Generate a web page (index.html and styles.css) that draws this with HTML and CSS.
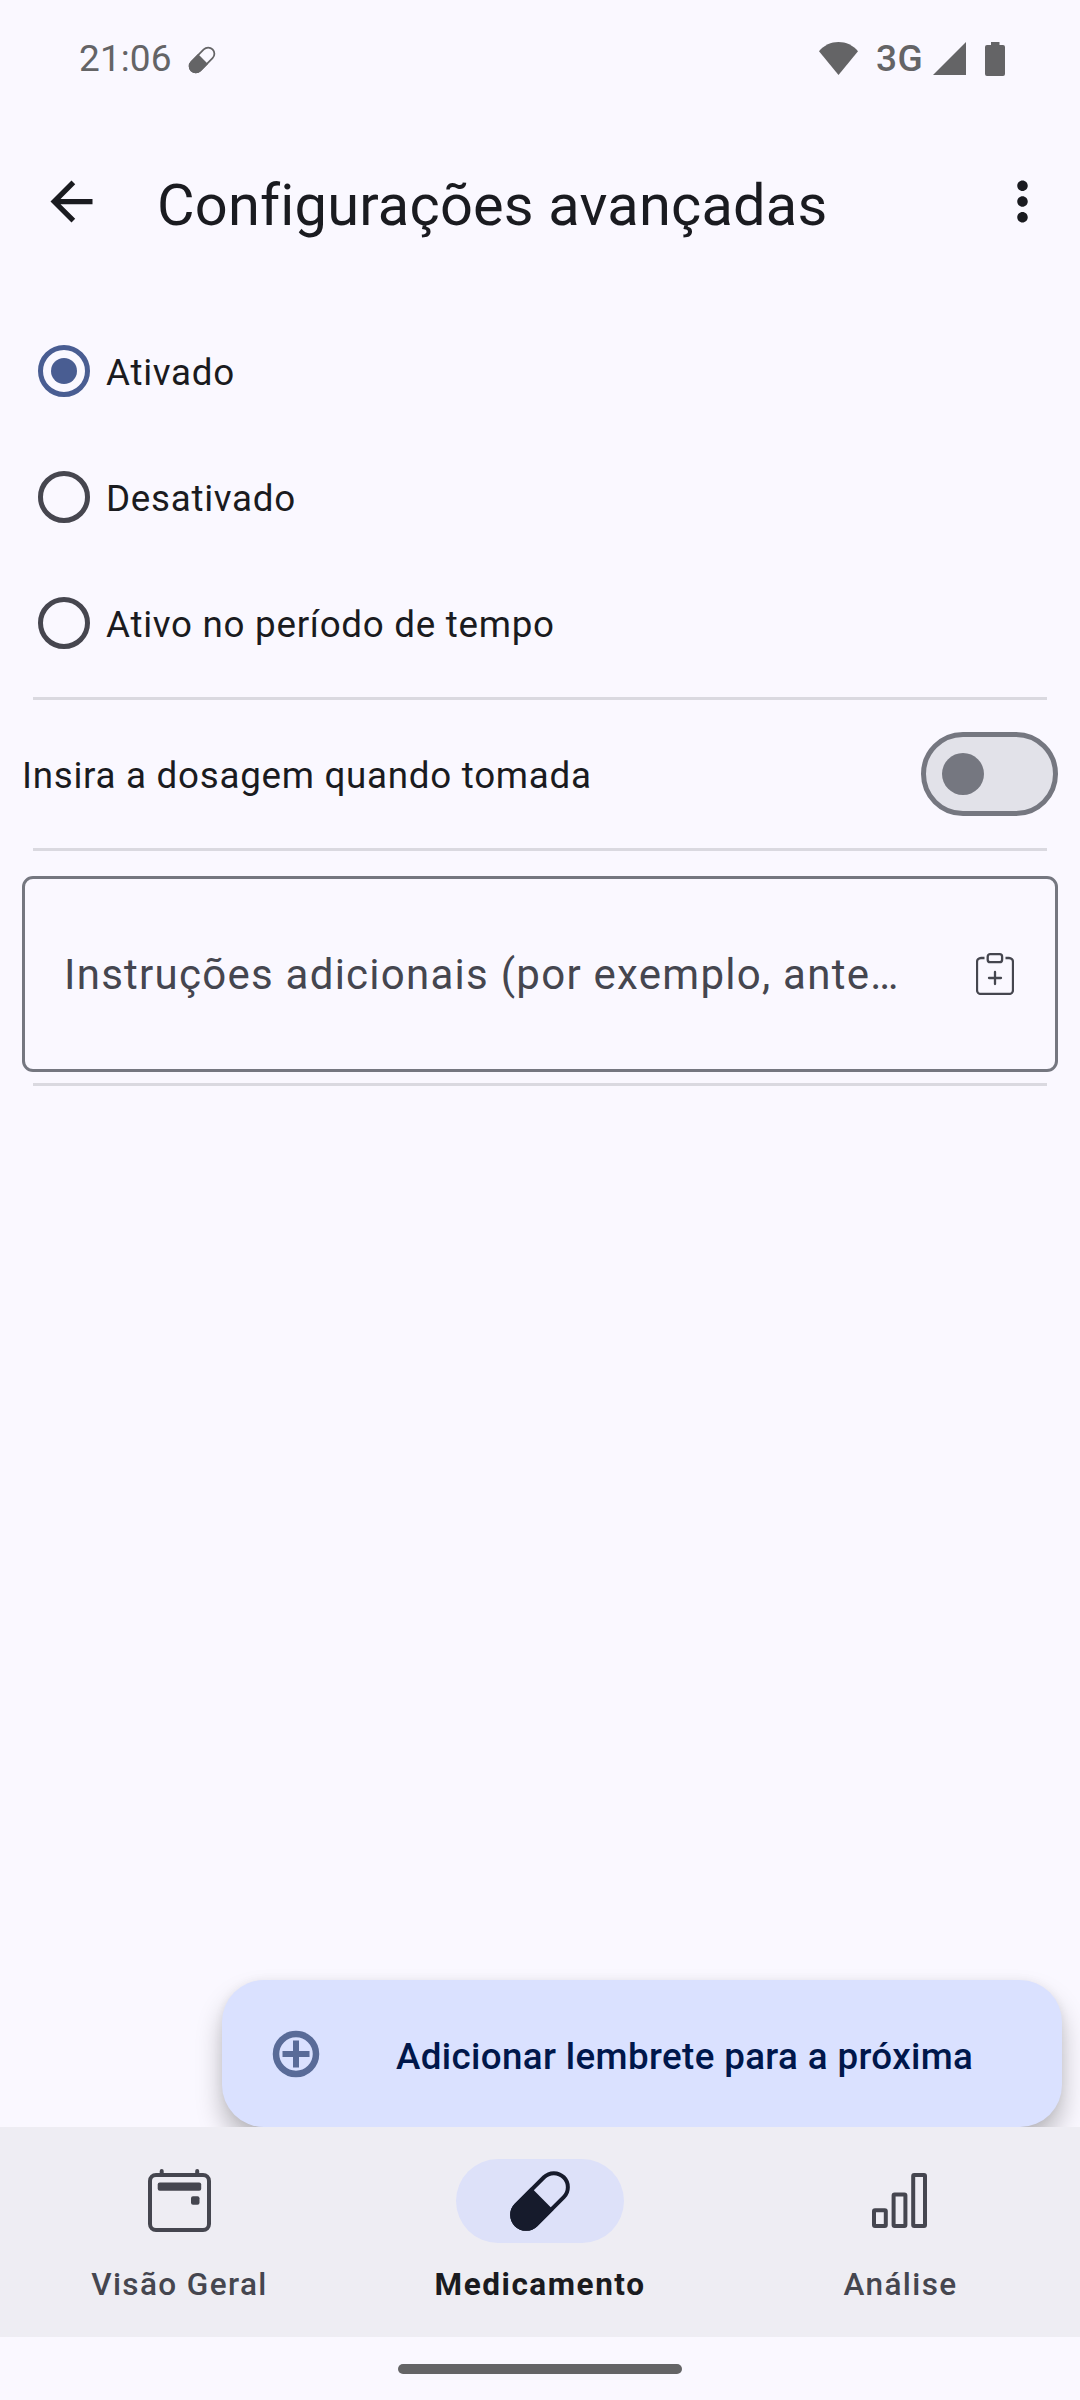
FILE: index.html
```html
<!DOCTYPE html>
<html lang="pt-BR">
<head>
  <meta charset="UTF-8">
  <title>Configurações avançadas</title>
  <link rel="stylesheet" href="styles.css">
</head>
<body>
  <div class="screen">
    <div class="status-bar">
      <span class="clock">21:06</span>
      <svg class="status-pill" viewBox="0 0 72 72">
        <g transform="translate(36 36) rotate(-45)">
          <rect x="-33.6" y="-14" width="67.2" height="28" rx="14" fill="none" stroke="currentColor" stroke-width="4"/>
          <path d="M3.2 -15.8H-19.8a15.8 15.8 0 0 0 0 31.6H3.2z" fill="currentColor"/>
        </g>
      </svg>
      <div class="status-right">
        <svg class="wifi" width="39" height="33" viewBox="0 0 39 33"><path d="M19.5 33L0 9.2C5 3.2 12 0 19.5 0S34 3.2 39 9.2z" fill="currentColor"/></svg>
        <span class="network">3G</span>
        <svg class="signal" width="33" height="33" viewBox="0 0 33 33"><path d="M33 0V33H0z" fill="currentColor"/></svg>
        <svg class="battery" width="20" height="34" viewBox="0 0 20 34"><path d="M6 0h8.500v3H18a2 2 0 0 1 2 2v27a2 2 0 0 1-2 2H2a2 2 0 0 1-2-2V5a2 2 0 0 1 2-2h4z" fill="currentColor"/></svg>
      </div>
    </div>

    <header class="app-bar">
      <svg class="back" viewBox="0 0 24 24"><path d="M20 11H7.830l5.590-5.590L12 4l-8 8 8 8 1.410-1.410L7.830 13H20v-2z" fill="currentColor"/></svg>
      <h1>Configurações avançadas</h1>
      <svg class="more" viewBox="0 0 24 24"><path d="M12 8c1.100 0 2-.9 2-2s-.9-2-2-2-2 .9-2 2 .9 2 2 2zm0 2c-1.100 0-2 .9-2 2s.9 2 2 2 2-.9 2-2-.9-2-2-2zm0 6c-1.100 0-2 .9-2 2s.9 2 2 2 2-.9 2-2-.9-2-2-2z" fill="currentColor"/></svg>
    </header>

    <main class="content">
      <div class="radio-row checked"><span class="radio"></span><span class="label">Ativado</span></div>
      <div class="radio-row"><span class="radio"></span><span class="label">Desativado</span></div>
      <div class="radio-row"><span class="radio"></span><span class="label">Ativo no período de tempo</span></div>

      <div class="divider divider-first"></div>

      <div class="switch-row">
        <span class="label">Insira a dosagem quando tomada</span>
        <span class="switch"><span class="thumb"></span></span>
      </div>

      <div class="divider"></div>

      <div class="text-field">
        <span class="hint">Instruções adicionais (por exemplo, ante…</span>
        <svg width="38" height="42" viewBox="0 0 38 42" fill="none" stroke="currentColor" stroke-width="2.300">
          <path d="M8.500 5H5a4 4 0 0 0-4 4v28a4 4 0 0 0 4 4h28a4 4 0 0 0 4-4V9a4 4 0 0 0-4-4h-3.500"/>
          <rect x="11.700" y="1.200" width="14.400" height="8" rx="2.500"/>
          <path d="M19 19v12M13 25h12" stroke-linecap="round"/>
        </svg>
      </div>

      <div class="divider divider-last"></div>

      <div class="fab">
        <svg width="48" height="48" viewBox="0 0 48 48" fill="none" stroke="currentColor">
          <circle cx="24" cy="24" r="20" stroke-width="6.500"/>
          <path d="M24 10.500v27M10.500 24h27" stroke-width="6"/>
        </svg>
        <span class="fab-text">Adicionar lembrete para a próxima</span>
      </div>
    </main>

    <nav class="bottom-nav">
      <div class="nav-item">
        <div class="indicator">
          <svg width="63" height="63" viewBox="0 0 63 63">
            <rect x="2" y="6" width="59" height="55" rx="6" fill="none" stroke="currentColor" stroke-width="4"/>
            <path d="M13.700 6V2M49.200 6V2" stroke="currentColor" stroke-width="4" stroke-linecap="round"/>
            <rect x="9.700" y="13.500" width="43.500" height="8.200" rx="2" fill="currentColor"/>
            <rect x="43" y="27.300" width="8.500" height="8.500" rx="2" fill="currentColor"/>
          </svg>
        </div>
        <span>Visão Geral</span>
      </div>
      <div class="nav-item active">
        <div class="indicator">
          <svg width="72" height="72" viewBox="0 0 72 72">
            <g transform="translate(36 36) rotate(-45)">
              <rect x="-33.6" y="-14" width="67.2" height="28" rx="14" fill="none" stroke="currentColor" stroke-width="4"/>
              <path d="M3.2 -15.8H-19.8a15.8 15.8 0 0 0 0 31.6H3.2z" fill="currentColor"/>
            </g>
          </svg>
        </div>
        <span>Medicamento</span>
      </div>
      <div class="nav-item">
        <div class="indicator">
          <svg width="55" height="55" viewBox="0 0 55 55" fill="none" stroke="currentColor" stroke-width="4">
            <rect x="2" y="37.300" width="11.800" height="15.700" rx="1"/>
            <rect x="21.600" y="21.600" width="11.800" height="31.400" rx="1"/>
            <rect x="41.200" y="2" width="11.800" height="51" rx="1"/>
          </svg>
        </div>
        <span>Análise</span>
      </div>
    </nav>

    <div class="gesture-area"><div class="gesture-bar"></div></div>
  </div>
</body>
</html>
```
FILE: styles.css
```css
* {
  box-sizing: border-box;
}

body {
  margin: 0;
  background: #faf8ff;
  color: #1a1b20;
  font-family: Roboto, "Liberation Sans", sans-serif;
}

svg {
  display: block;
  flex: none;
}

.screen {
  width: 1080px;
  height: 2400px;
  display: flex;
  flex-direction: column;
}

/* Status bar */
.status-bar {
  height: 128px;
  padding: 0 75px 11px 79px;
  display: flex;
  align-items: center;
  color: #646466;
}

.clock {
  font-size: 37px;
  line-height: 44px;
  letter-spacing: 0.1px;
  padding-top: 1px;
}

.status-pill {
  width: 32px;
  height: 32px;
  margin: 3px 0 0 14px;
}

.status-right {
  display: flex;
  align-items: center;
  margin-left: auto;
}

.network {
  font-size: 37px;
  font-weight: 500;
  line-height: 44px;
  margin: 0 10px 0 18px;
  letter-spacing: 0.4px;
}

.battery {
  margin: 1px 0 0 19px;
}

/* App bar */
.app-bar {
  height: 147px;
  padding: 0 26px 0 40px;
  display: flex;
  align-items: center;
}

.app-bar svg {
  width: 63px;
  height: 63px;
  margin-bottom: 1px;
}

.app-bar h1 {
  flex: 1;
  margin: 0;
  padding: 6px 0 0 54px;
  font-size: 57.75px;
  font-weight: 400;
  line-height: 68px;
  letter-spacing: 0.2px;
}

/* Content */
.content {
  flex: 1;
  padding-top: 33px;
  display: flex;
  flex-direction: column;
  overflow: hidden;
}

.label {
  font-size: 36.75px;
  line-height: 44px;
  letter-spacing: 0.72px;
  padding-top: 3px;
}

.radio-row {
  height: 126px;
  padding-left: 38px;
  display: flex;
  align-items: center;
  gap: 16px;
}

.radio {
  width: 52px;
  height: 52px;
  border: 5px solid #46464f;
  border-radius: 50%;
  display: flex;
  align-items: center;
  justify-content: center;
}

.checked .radio {
  border-color: #495d92;
}

.checked .radio::after {
  content: "";
  width: 26px;
  height: 26px;
  border-radius: 50%;
  background: #495d92;
}

.divider {
  flex: none;
  height: 3px;
  margin: 0 33px;
  background: #dad9e0;
}

.divider-first,
.divider-last {
  margin-top: 11px;
}

.switch-row {
  height: 148px;
  padding: 0 22px;
  display: flex;
  align-items: center;
  justify-content: space-between;
}

.switch {
  width: 137px;
  height: 84px;
  padding-left: 16px;
  border: 5px solid #757780;
  border-radius: 42px;
  background: #e2e2e9;
  display: flex;
  align-items: center;
}

.thumb {
  width: 42px;
  height: 42px;
  border-radius: 50%;
  background: #757780;
}

.text-field {
  height: 196px;
  margin: 25px 22px 0;
  padding: 0 41px 0 39px;
  border: 3px solid #757780;
  border-radius: 11px;
  color: #45464f;
  display: flex;
  align-items: center;
  justify-content: space-between;
}

.hint {
  font-size: 42px;
  line-height: 50px;
  letter-spacing: 1.26px;
  padding-top: 2px;
}

/* Extended floating button, its shadow is cut by the bottom nav */
.fab {
  width: 840px;
  height: 147px;
  margin: auto 18px 0 auto;
  padding-left: 49.5px;
  border-radius: 42px;
  background: #dae1ff;
  color: #596b98;
  box-shadow: 0 16px 26px rgba(0, 0, 0, 0.26), 0 0 10px rgba(0, 0, 0, 0.05);
  display: flex;
  align-items: center;
}

.fab-text {
  margin-left: 76.5px;
  padding-top: 6px;
  font-size: 36.75px;
  font-weight: 500;
  line-height: 44px;
  letter-spacing: 0.36px;
  color: #00174b;
}

/* Bottom navigation */
.bottom-nav {
  height: 210px;
  padding-top: 32px;
  display: grid;
  grid-template-columns: 359px 362px 359px;
  background: #eeedf3;
}

.nav-item {
  display: flex;
  flex-direction: column;
  align-items: center;
  color: #45464f;
  font-size: 31.5px;
  font-weight: 500;
  line-height: 42px;
  letter-spacing: 1.4px;
}

.indicator {
  width: 168px;
  height: 84px;
  margin-bottom: 21px;
  padding-bottom: 1px;
  border-radius: 42px;
  display: flex;
  align-items: center;
  justify-content: center;
}

.nav-item:last-child .indicator {
  padding-right: 3px;
  padding-bottom: 2px;
}

.active {
  color: #1a1b20;
  font-weight: 700;
  letter-spacing: 1.55px;
}

.active .indicator {
  background: #dde1f9;
  color: #161b2c;
}

.gesture-area {
  height: 63px;
  padding-top: 27px;
}

.gesture-bar {
  width: 284px;
  height: 10px;
  margin: 0 auto;
  border-radius: 5px;
  background: #646466;
}
```
